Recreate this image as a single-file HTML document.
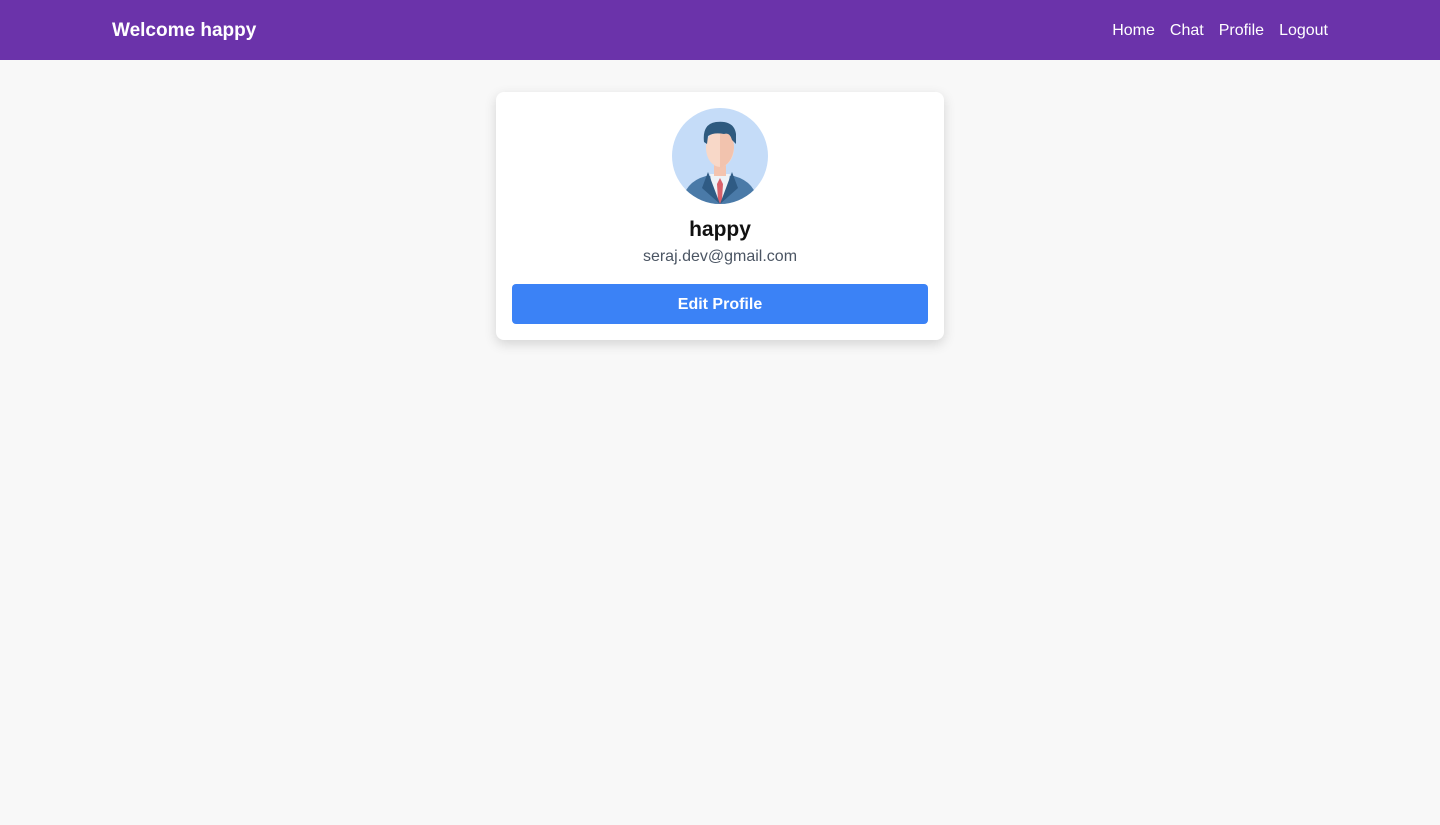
<!DOCTYPE html>
<html><head><style>
body{margin:0;background:#f8f8f8;font-family:"Liberation Sans",sans-serif;width:1440px;height:825px;overflow:hidden}
.nav{height:60px;background:#6b33aa;color:#fff;position:relative}
.brand{position:absolute;left:112px;top:20px;font-size:19px;font-weight:bold}
.links{position:absolute;right:112px;top:22px;font-size:16px}
.links span{margin-left:15px}
.card{position:absolute;left:496px;top:92px;width:448px;height:248px;background:#fff;border-radius:8px;box-shadow:0 4px 12px rgba(0,0,0,.15)}
.av{position:absolute;left:176px;top:16px}
.name{position:absolute;top:126px;width:100%;text-align:center;font-size:21px;font-weight:bold;color:#111}
.mail{position:absolute;top:156px;width:100%;text-align:center;font-size:16px;color:#4b5563}
.btn{position:absolute;left:16px;top:192px;width:416px;height:40px;background:#3b82f6;color:#fff;border-radius:4px;text-align:center;line-height:42px;font-weight:bold;font-size:16px}
</style></head><body>
<div class="nav"><div class="brand">Welcome happy</div><div class="links"><span>Home</span><span>Chat</span><span>Profile</span><span>Logout</span></div></div>
<div class="card">
<svg class="av" width="96" height="96" viewBox="0 0 96 96">
<defs><clipPath id="c"><circle cx="48" cy="48" r="48"/></clipPath></defs>
<circle cx="48" cy="48" r="48" fill="#c5dcf8"/>
<g clip-path="url(#c)">
<path d="M10 96 Q12 74 34 68 L62 68 Q84 74 86 96Z" fill="#4a7aa8"/>
<path d="M38 66 L58 66 L56 80 L48 96 L40 80Z" fill="#eef3f8"/>
<path d="M48 70 L51 76 L50 92 L48 96 L46 92 L45 76Z" fill="#d9626c"/>
<path d="M36 64 L48 96 L30 80Z M60 64 L48 96 L66 80Z" fill="#2f5b84"/>
<rect x="42" y="50" width="12" height="18" fill="#f3c4b0"/>
<ellipse cx="48" cy="40" rx="14" ry="19" fill="#f8d8c8"/>
<path d="M48 22 Q62 24 62 40 Q60 56 48 60Z" fill="#f2c3ae"/>
<path d="M32 34 Q30 16 44 14 Q62 12 64 26 L64 36 L60 32 Q58 24 52 26 Q42 24 36 28 L35 36Z" fill="#2e5a7f"/>
</g>
</svg>
<div class="name">happy</div>
<div class="mail">seraj.dev@gmail.com</div>
<div class="btn">Edit Profile</div>
</div>
</body></html>
